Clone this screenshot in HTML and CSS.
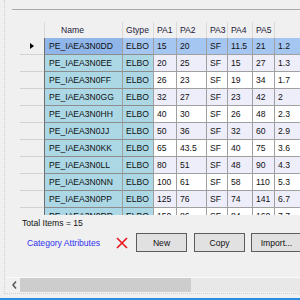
FILE: index.html
```html
<!DOCTYPE html>
<html>
<head>
<meta charset="utf-8">
<link rel="stylesheet" href="styles.css">
</head>
<body>
<div class="window">
  <div class="frame">
    <div class="topgap"></div>
    <div class="panel">
      <div class="grid">
        <div class="row head">
          <div class="hc corner"></div>
          <div class="hc hname">Name</div>
          <div class="hc">Gtype</div>
          <div class="hc">PA1</div>
          <div class="hc">PA2</div>
          <div class="hc">PA3</div>
          <div class="hc">PA4</div>
          <div class="hc">PA5</div>
          <div class="hc"></div>
        </div>
        <div class="row sel">
          <div class="rh"><span class="arrow"></span></div>
          <div class="cell name">PE_IAEA3N0DD</div><div class="cell gtype">ELBO</div>
          <div class="cell d">15</div><div class="cell d">20</div><div class="cell d">SF</div><div class="cell d">11.5</div><div class="cell d">21</div><div class="cell d">1.2</div>
        </div>
        <div class="row alt">
          <div class="rh"></div>
          <div class="cell name">PE_IAEA3N0EE</div><div class="cell gtype">ELBO</div>
          <div class="cell d">20</div><div class="cell d">25</div><div class="cell d">SF</div><div class="cell d">15</div><div class="cell d">27</div><div class="cell d">1.3</div>
        </div>
        <div class="row">
          <div class="rh"></div>
          <div class="cell name">PE_IAEA3N0FF</div><div class="cell gtype">ELBO</div>
          <div class="cell d">26</div><div class="cell d">23</div><div class="cell d">SF</div><div class="cell d">19</div><div class="cell d">34</div><div class="cell d">1.7</div>
        </div>
        <div class="row alt">
          <div class="rh"></div>
          <div class="cell name">PE_IAEA3N0GG</div><div class="cell gtype">ELBO</div>
          <div class="cell d">32</div><div class="cell d">27</div><div class="cell d">SF</div><div class="cell d">23</div><div class="cell d">42</div><div class="cell d">2</div>
        </div>
        <div class="row">
          <div class="rh"></div>
          <div class="cell name">PE_IAEA3N0HH</div><div class="cell gtype">ELBO</div>
          <div class="cell d">40</div><div class="cell d">30</div><div class="cell d">SF</div><div class="cell d">26</div><div class="cell d">48</div><div class="cell d">2.3</div>
        </div>
        <div class="row alt">
          <div class="rh"></div>
          <div class="cell name">PE_IAEA3N0JJ</div><div class="cell gtype">ELBO</div>
          <div class="cell d">50</div><div class="cell d">36</div><div class="cell d">SF</div><div class="cell d">32</div><div class="cell d">60</div><div class="cell d">2.9</div>
        </div>
        <div class="row">
          <div class="rh"></div>
          <div class="cell name">PE_IAEA3N0KK</div><div class="cell gtype">ELBO</div>
          <div class="cell d">65</div><div class="cell d">43.5</div><div class="cell d">SF</div><div class="cell d">40</div><div class="cell d">75</div><div class="cell d">3.6</div>
        </div>
        <div class="row alt">
          <div class="rh"></div>
          <div class="cell name">PE_IAEA3N0LL</div><div class="cell gtype">ELBO</div>
          <div class="cell d">80</div><div class="cell d">51</div><div class="cell d">SF</div><div class="cell d">48</div><div class="cell d">90</div><div class="cell d">4.3</div>
        </div>
        <div class="row">
          <div class="rh"></div>
          <div class="cell name">PE_IAEA3N0NN</div><div class="cell gtype">ELBO</div>
          <div class="cell d">100</div><div class="cell d">61</div><div class="cell d">SF</div><div class="cell d">58</div><div class="cell d">110</div><div class="cell d">5.3</div>
        </div>
        <div class="row alt">
          <div class="rh"></div>
          <div class="cell name">PE_IAEA3N0PP</div><div class="cell gtype">ELBO</div>
          <div class="cell d">125</div><div class="cell d">76</div><div class="cell d">SF</div><div class="cell d">74</div><div class="cell d">141</div><div class="cell d">6.7</div>
        </div>
        <div class="row">
          <div class="rh"></div>
          <div class="cell name">PE_IAEA3N0RR</div><div class="cell gtype">ELBO</div>
          <div class="cell d">150</div><div class="cell d">86</div><div class="cell d">SF</div><div class="cell d">84</div><div class="cell d">160</div><div class="cell d">7.7</div>
        </div>
      </div>
      <div class="total">Total Items = 15</div>
      <div class="actions">
        <span class="cat">Category Attributes</span>
        <svg class="xicon" width="12" height="12" viewBox="0 0 12 12"><path d="M1 1 L11 11 M11 1 L1 11" stroke="#e8141c" stroke-width="1.6" fill="none"/></svg>
        <button class="btn">New</button>
        <button class="btn copy">Copy</button>
        <button class="btn import">Import...</button>
      </div>
    </div>
    <div class="hscroll">
      <div class="sarrow"><svg width="5" height="8" viewBox="0 0 5 8"><path d="M4 0.5 L1 4 L4 7.5" stroke="#555" stroke-width="1.5" fill="none"/></svg></div>
      <div class="thumb"></div>
      <div class="track"></div>
    </div>
  </div>
  <div class="gap"></div>
  <div class="accent"></div>
</div>
</body>
</html>
```
FILE: styles.css
```css
* { box-sizing: border-box; }
html, body { margin: 0; padding: 0; }
body {
  width: 300px;
  height: 300px;
  overflow: hidden;
  background: #f0f0f0;
  font-family: "Liberation Sans", Arial, sans-serif;
  font-size: 8.6px;
  color: #111;
}
.window { display: flex; flex-direction: column; height: 300px; }
.frame {
  flex: 1;
  min-height: 0;
  margin-left: 4px;
  border-left: 1px dotted #cfcfcf;
  border-bottom: 1px dotted #cfcfcf;
  display: flex;
  flex-direction: column;
}
.topgap { height: 9px; flex: none; }
.panel {
  flex: none;
  margin-left: 7px;
  border-top: 1px solid #a9a9a9;
  padding-left: 8px;
}
.grid {
  margin-top: 12px;
  height: 193px;
  width: 290px;
  overflow: hidden;
}
.row {
  display: grid;
  grid-template-columns: 24px 78px 31px 23px 30px 21px 25px 22px 40px;
  height: 17px;
}
.row.head { height: 16px; }
.hc {
  border-left: 1px solid #dadada;
  padding-left: 3px;
  line-height: 16px;
  color: #1c1a3a;
  white-space: nowrap;
  overflow: hidden;
}
.hc.corner { border-left: none; }
.hc.hname { padding-left: 16px; }
.cell {
  border-left: 1px solid #a0a0a0;
  border-bottom: 1px solid #a0a0a0;
  padding-left: 3px;
  line-height: 16px;
  white-space: nowrap;
  overflow: hidden;
  background: #ffffff;
}
.row.alt .d { background: #eeeefb; }
.name {
  border-left-color: #6e6e6e;
  border-bottom-color: #8c8c8c;
  padding-left: 4px;
  background: #acd8e6;
}
.gtype { background: #acd8e6; border-bottom-color: #8c8c8c; }
.row.sel .d, .row.sel .gtype { background: #a5c6f1; }
.row.sel .name { background: #8fb5e9; }
.rh {
  border-bottom: 1px solid #d2d2d2;
  display: flex;
  align-items: center;
  padding-left: 10px;
}
.arrow {
  width: 0;
  height: 0;
  border-top: 3.5px solid transparent;
  border-bottom: 3.5px solid transparent;
  border-left: 4px solid #000;
}
.total {
  margin-top: 1px;
  height: 14px;
  line-height: 14px;
  padding-left: 2px;
  color: #111;
}
.actions {
  margin-top: 3px;
  height: 19px;
  display: flex;
  align-items: center;
  padding-left: 7px;
}
.cat { color: #3030ee; width: 89px; flex: none; white-space: nowrap; }
.xicon { flex: none; margin-right: 8px; }
.btn {
  flex: none;
  width: 51px;
  height: 19px;
  padding: 0;
  border: 1px solid #5c5c5c;
  background: #e1e1e1;
  font: inherit;
  color: #111;
  display: flex;
  align-items: center;
  justify-content: center;
  white-space: nowrap;
}
.btn.copy { margin-left: 7px; }
.btn.import { margin-left: 6px; }
.hscroll {
  margin-top: auto;
  margin-bottom: 1px;
  height: 15px;
  border-top: 1px solid #fafafa;
  display: flex;
  flex: none;
}
.sarrow {
  width: 15px;
  display: flex;
  align-items: center;
  padding-left: 7px;
  background: #f0f0f0;
}
.thumb { width: 171px; background: #cdcdcd; }
.track { flex: 1; background: #e8e8e8; }
.gap { height: 4px; flex: none; }
.accent { height: 2px; flex: none; background: #2a8ee0; }
```
